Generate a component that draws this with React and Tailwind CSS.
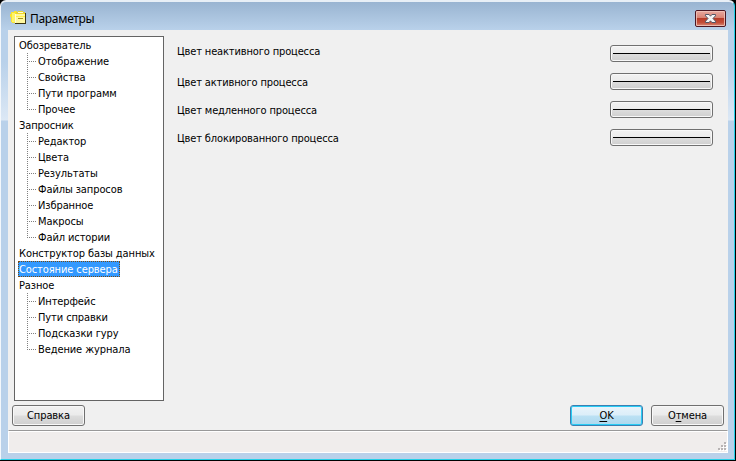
import React from "react";

const tree = [
  { label: "Обозреватель", children: ["Отображение", "Свойства", "Пути программ", "Прочее"] },
  {
    label: "Запросник",
    children: ["Редактор", "Цвета", "Результаты", "Файлы запросов", "Избранное", "Макросы", "Файл истории"],
  },
  { label: "Конструктор базы данных", children: [] },
  { label: "Состояние сервера", children: [], selected: true },
  { label: "Разное", children: ["Интерфейс", "Пути справки", "Подсказки гуру", "Ведение журнала"] },
];

const colors = [
  { label: "Цвет неактивного процесса", text: "-mt-px" },
  { label: "Цвет активного процесса", text: "pt-[5px]" },
  { label: "Цвет медленного процесса", text: "pt-[5px]" },
  { label: "Цвет блокированного процесса", text: "pt-[5px]" },
];

function FolderIcon() {
  return (
    <svg width="17" height="15" viewBox="0 0 17 15" shapeRendering="crispEdges">
      <path d="M1 2h3v-1h3v2h-1v10h-4v-1h-1v-5h-1v-3h1z" fill="#f8e430" />
      <path d="M2 3h3v9h-3z" fill="#fff56a" />
      <path d="M6 2h2v-1h5v1h2v1h1v11h-11v-10h1z" fill="#ecd52c" />
      <path d="M6 4h9v9h-9z" fill="#fff8a0" />
      <path d="M8 2h5v1h-5z" fill="#fffcd8" />
      <path d="M5 4h1v9h-1z" fill="#fffde0" />
      <path d="M6 6h9v1h-9z" fill="#fff04a" />
      <path d="M8 8h5v1h-5z" fill="#a39528" />
      <path d="M15 3h1v11h-11v-1h10z" fill="#3c3512" />
    </svg>
  );
}

function CloseButton() {
  return (
    <svg width="31" height="17" viewBox="0 0 31 17">
      <defs>
        <linearGradient id="close" x1="0" y1="0" x2="0" y2="1">
          <stop offset="0" stopColor="#e9aba2" />
          <stop offset=".47" stopColor="#d98273" />
          <stop offset=".5" stopColor="#b83c29" />
          <stop offset=".75" stopColor="#c34d38" />
          <stop offset="1" stopColor="#dc9482" />
        </linearGradient>
      </defs>
      <rect x=".5" y=".5" width="30" height="16" rx="1.5" fill="url(#close)" stroke="#4b1723" />
      <rect x="1.5" y="1.5" width="28" height="14" rx=".5" fill="none" stroke="#f0c3ba" strokeOpacity=".85" />
      <path
        d="M10.5 4.5h3.6l1.4 1.7 1.4-1.7h3.6v1.3l-2.5 2.7 2.5 2.7v1.3h-3.6l-1.4-1.7-1.4 1.7h-3.6v-1.3l2.5-2.7-2.5-2.7z"
        fill="#f5f5f5"
        stroke="#535666"
      />
    </svg>
  );
}

function Grip() {
  return (
    <svg width="9" height="9" viewBox="0 0 9 9" shapeRendering="crispEdges">
      {[[6, 0], [3, 3], [6, 3], [0, 6], [3, 6], [6, 6]].map(([x, y]) => (
        <g key={`${x}-${y}`}>
          <rect x={x + 1} y={y + 1} width="2" height="2" fill="#ffffff" />
          <rect x={x} y={y} width="2" height="2" fill="#b8b4b4" />
        </g>
      ))}
    </svg>
  );
}

function Branch({ last }) {
  return (
    <svg width="11" height="16" viewBox="0 0 11 16" className="ml-[12px] shrink-0" shapeRendering="crispEdges">
      <path d={last ? "M.5 0V9" : "M.5 0V16"} stroke="#808080" strokeDasharray="1 1" />
      <path d="M0 8.5H9" stroke="#808080" strokeDasharray="1 1" />
    </svg>
  );
}

function Button({ children, focus, className = "" }) {
  return (
    <button
      className={`flex h-[21px] w-[73px] items-center justify-center rounded-[3px] border pt-[2px] tracking-[-0.1px] ${
        focus
          ? "border-[#3c7fb1] bg-[linear-gradient(#e9f4fb_0%,#dceef9_48%,#bce1f4_52%,#acd8ee_100%)] shadow-[inset_0_0_0_1px_#28ccf5]"
          : "border-[#707070] bg-[linear-gradient(#f2f2f2_0%,#ebebeb_48%,#dddddd_52%,#cfcfcf_100%)] shadow-[inset_0_0_0_1px_#f8f8f8]"
      } ${className}`}
    >
      {children}
    </button>
  );
}

export default function App() {
  return (
    <div className="h-[461px] w-[736px] overflow-hidden bg-black font-['DejaVu_Sans_Condensed','DejaVu_Sans',sans-serif] text-[11px] text-black [font-stretch:condensed]">
      <div className="flex h-[460px] w-[735px] flex-col rounded-t-[6px] border border-t-2 border-b-[#24d0e8] border-l-[#f4f8fc] border-r-[#24d0e8] border-t-[#e8eff6] bg-[linear-gradient(#99b4d1_0px,#b9d1ea_28px,#b9d1ea_60px,#dce8f5_118px,#b9d1ea_119px)] pl-[7px] pr-[6px]">
        <header className="flex h-[28px] shrink-0 items-start">
          <div className="ml-[2px] mt-[8px]">
            <FolderIcon />
          </div>
          <h1 className="ml-[3px] mt-[8px] font-['Noto_Sans','Open_Sans',sans-serif] text-[12px] leading-[18px] tracking-[-0.3px]">Параметры</h1>
          <button className="ml-auto mr-[2px] mt-[8px]">
            <CloseButton />
          </button>
        </header>

        <div className="flex h-[423px] shrink-0 flex-col bg-[#f0f0f0]">
          <div className="flex h-[371px] pl-[6px] pt-[6px]">
            <nav className="h-[365px] w-[150px] shrink-0 border border-[#646464] bg-white pl-[4px] tracking-[-0.1px]">
              {tree.map((group) => (
                <div key={group.label}>
                  <div className="flex h-[16px] items-center whitespace-nowrap">
                    {group.selected ? (
                      <span className="-ml-px flex h-[16px] w-[102px] items-center bg-[#3399ff] pl-px pt-[2px] text-white outline-1 -outline-offset-1 outline-dotted outline-[#7a4a10]">
                        {group.label}
                      </span>
                    ) : (
                      <span className="pt-[2px]">{group.label}</span>
                    )}
                  </div>
                  {group.children.map((child, i) => (
                    <div key={child} className="-ml-[4px] flex h-[16px] items-center whitespace-nowrap">
                      <Branch last={i === group.children.length - 1} />
                      <span className="pt-[2px]">{child}</span>
                    </div>
                  ))}
                </div>
              ))}
            </nav>
            <section className="ml-[13px] mt-[3px] w-[536px] tracking-[-0.14px]">
              {colors.map((c) => (
                <div key={c.label} className="flex h-[28px] items-center justify-between">
                  <span className={c.text}>{c.label}</span>
                  <button className="flex h-[17px] w-[103px] items-center justify-center rounded-[3px] border border-[#707070] bg-[linear-gradient(#f2f2f2_0%,#ebebeb_48%,#dddddd_52%,#cfcfcf_100%)] shadow-[inset_0_0_0_1px_#f8f8f8]">
                    <span className="h-px w-[97px] bg-black" />
                  </button>
                </div>
              ))}
            </section>
          </div>
          <div className="flex h-[29px] items-start pl-[4px] pr-[4px] pt-[4px]">
            <Button>Справка</Button>
            <Button focus className="ml-auto">
              <span><u className="underline-offset-2">O</u>K</span>
            </Button>
            <Button className="ml-[8px]">
              <span>О<u className="underline-offset-2">т</u>мена</span>
            </Button>
          </div>
          <footer className="flex h-[23px] items-end justify-end border border-t-[#999999] border-r-white border-b-white border-l-white bg-[#f0edec] pb-px shadow-[inset_0_1px_0_#fff]">
            <Grip />
          </footer>
        </div>
      </div>
    </div>
  );
}
